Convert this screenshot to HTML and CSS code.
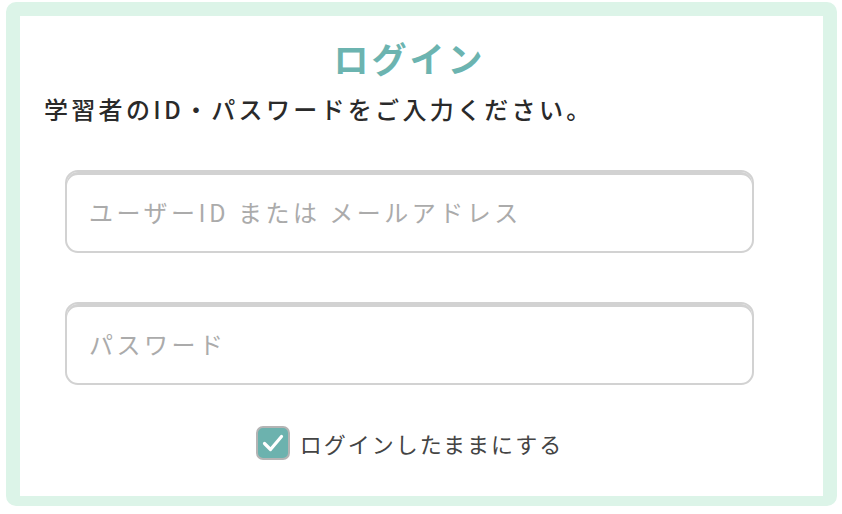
FILE: index.html
```html
<!DOCTYPE html>
<html lang="ja">
<head>
<meta charset="utf-8">
<link rel="stylesheet" href="styles.css">
</head>
<body>
<div class="frame">
  <div class="card">
    <h1 class="title">ログイン</h1>
    <p class="lead">学習者のID・パスワードをご入力ください。</p>
    <div class="form">
      <input class="field" type="text" placeholder="ユーザーID または メールアドレス">
      <input class="field" type="password" placeholder="パスワード">
      <label class="keep">
        <span class="check">
          <svg width="26" height="26" viewBox="0 0 26 26"><path d="M4.5 13.5 L10.5 19.5 L21.5 6.5" fill="none" stroke="#fff" stroke-width="3.2" stroke-linecap="round" stroke-linejoin="round"/></svg>
        </span>
        <span class="keep-text">ログインしたままにする</span>
      </label>
    </div>
  </div>
</div>
</body>
</html>
```

FILE: styles.css
```css
html, body {
  margin: 0;
  padding: 0;
  background: #ffffff;
}
body {
  font-family: "Noto Sans CJK JP", "Noto Sans", sans-serif;
}
.frame {
  margin: 2px 5px 0 6px;
  width: 803px;
  height: 480px;
  border: 14px solid #dcf4e8;
  border-bottom-width: 10px;
  border-radius: 10px;
  background: #ffffff;
}
.card {
  padding: 20px 48px 0 24px;
  display: flex;
  flex-direction: column;
}
.title {
  margin: 0;
  text-align: center;
  font-size: 35px;
  line-height: 44px;
  font-weight: 700;
  color: #6cb4b0;
  letter-spacing: 3px;
}
.lead {
  margin: 14px 0 0 0;
  font-size: 24px;
  line-height: 30px;
  font-weight: 500;
  color: #2a2a2a;
  letter-spacing: 3.3px;
}
.form {
  margin: 46px 21px 0 21px;
  display: flex;
  flex-direction: column;
  gap: 49px;
}
.field {
  box-sizing: border-box;
  width: 100%;
  height: 83px;
  margin: 0;
  padding: 0 22px 0 22px;
  border: 2px solid #d2d2d2;
  border-radius: 13px;
  box-shadow: inset 0 3px 0 #d2d2d2;
  background: #ffffff;
  font-family: "Noto Sans CJK JP", "Noto Sans", sans-serif;
  font-size: 24px;
  letter-spacing: 3.5px;
  color: #333;
  outline: none;
}
.field::placeholder {
  color: #ababab;
}
.keep {
  margin-top: -9px;
  align-self: center;
  display: flex;
  align-items: center;
  gap: 10px;
  height: 36px;
}
.check {
  box-sizing: border-box;
  width: 34px;
  height: 34px;
  border: 2px solid #b4b4b4;
  border-radius: 7px;
  background: #6cb2ae;
  display: flex;
  align-items: center;
  justify-content: center;
}
.keep-text {
  font-size: 22px;
  letter-spacing: 2px;
  color: #444444;
  line-height: 30px;
}
```
